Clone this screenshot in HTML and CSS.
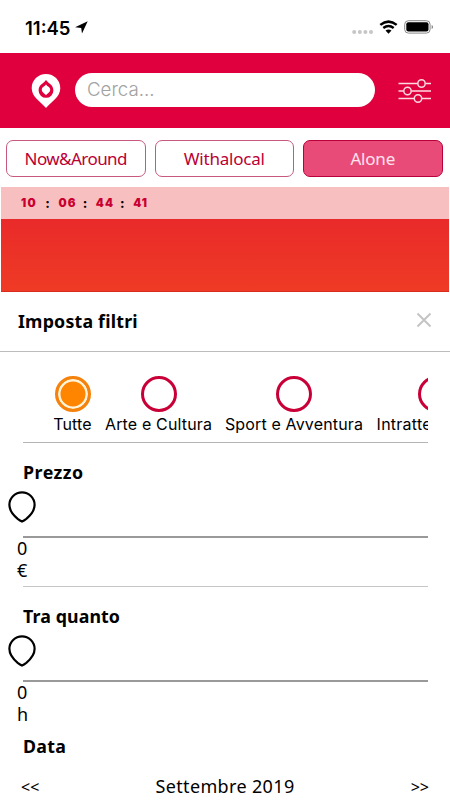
FILE: index.html
```html
<!DOCTYPE html>
<html lang="it">
<head>
<meta charset="utf-8">
<meta name="viewport" content="width=device-width">
<title>Imposta filtri</title>
<link rel="stylesheet" href="styles.css">
</head>
<body>
<div class="status">
  <span class="clock">11:45</span>
  <svg class="location" width="13" height="13" viewBox="0 0 13 13"><path d="M12.700.2 7 12.500 6.200 6.900.1 6.300Z"/></svg>
  <svg class="signal" width="22" height="6" viewBox="0 0 22 6"><circle cx="2.2" cy="3" r="2"/><circle cx="7.8" cy="3" r="2"/><circle cx="13.4" cy="3" r="2"/><circle cx="19" cy="3" r="2"/></svg>
  <svg class="wifi" width="19" height="14" viewBox="0 0 19 14"><path d="M1.3 4.9Q9.500-1.700 17.700 4.900M4.300 8Q9.500 4 14.700 8" fill="none" stroke="#000" stroke-width="2.500"/><path d="M6.500 10.600Q9.500 8.200 12.500 10.600L9.500 13.700Z"/></svg>
  <svg class="battery" width="30" height="14" viewBox="0 0 30 14"><rect x=".7" y=".7" width="25.400" height="12.400" rx="3.700" fill="none" stroke="#888"/><rect x="2.300" y="2.300" width="22.200" height="9.200" rx="2"/><path d="M27.600 5v4q1.500-.6 1.500-2t-1.500-2" fill="#888"/></svg>
</div>
<header class="topbar">
  <svg class="logo" width="30" height="36" viewBox="0 0 30 36"><path d="M15 1C7 1 .7 7.200.7 15.200.7 24 9.700 28.500 15 35c5.300-6.500 14.300-11 14.300-19.800C29.300 7.200 23 1 15 1Z" fill="#fff"/><path d="M15 7c-2 3.200-7.400 4.500-7.400 10.400a7.400 7.400 0 0 0 14.800 0C22.400 11.500 17 10.200 15 7Z" fill="#e0003d"/><path d="M15 11.500c-1 1.700-4.200 2.500-4.200 5.300 0 2.500 2.700 3.500 4.200 5.500 1.500-2 4.200-3 4.200-5.500 0-2.800-3.200-3.600-4.200-5.300Z" fill="#fff"/></svg>
  <div class="search">Cerca...</div>
  <svg class="sliders" width="34" height="24" viewBox="0 0 34 24"><g fill="none" stroke="#ffd9e2" stroke-width="1.500"><path d="M.5 4.500h19M27.500 4.500h5.500M.5 12h5M13.500 12H33M.5 19.500h15.500M24 19.500h9"/><circle cx="23.500" cy="4.500" r="3.700"/><circle cx="9.500" cy="12" r="3.700"/><circle cx="20" cy="19.500" r="3.700"/></g></svg>
</header>
<nav class="tabs">
  <div class="tab"><span class="t-now">Now&amp;Around</span></div>
  <div class="tab"><span class="t-with">Withalocal</span></div>
  <div class="tab active"><span class="t-with">Alone</span></div>
</nav>
<section class="hero">
  <div class="timer"><b>10</b><i>:</i><b>06</b><i>:</i><b>44</b><i>:</i><b>41</b></div>
</section>
<div class="panel-head">
  <h1>Imposta filtri</h1>
  <svg width="16" height="16" viewBox="0 0 16 16"><path d="M1.500 1.500l13 13M14.500 1.500l-13 13" stroke="#c3c3c3" stroke-width="1.900"/></svg>
</div>
<main class="panel">
  <div class="cats">
    <div class="cat tutte"><span class="ring on"></span><span class="label">Tutte</span></div>
    <div class="cat arte"><span class="ring"></span><span class="label">Arte e Cultura</span></div>
    <div class="cat sport"><span class="ring"></span><span class="label">Sport e Avventura</span></div>
    <div class="cat intra"><span class="ring"></span><span class="label">Intrattenimento</span></div>
  </div>
  <section class="filter price">
    <h2 class="h-prezzo">Prezzo</h2>
    <svg class="pin" width="28" height="32" viewBox="0 0 28 32"><path d="M14 1.300C7.200 1.300 1.400 6.800 1.400 13.800c0 6.700 4.600 11 8.300 14q2.500 1.900 4.300 2.800 1.800-.9 4.300-2.800c3.700-3 8.300-7.300 8.300-14C26.600 6.800 20.800 1.300 14 1.300Z"/></svg>
    <div class="track"></div>
    <div class="value">0</div>
    <div class="value">€</div>
  </section>
  <section class="filter">
    <h2>Tra quanto</h2>
    <svg class="pin" width="28" height="32" viewBox="0 0 28 32"><path d="M14 1.300C7.200 1.300 1.400 6.800 1.400 13.800c0 6.700 4.600 11 8.300 14q2.500 1.900 4.300 2.800 1.800-.9 4.300-2.800c3.700-3 8.300-7.300 8.300-14C26.600 6.800 20.800 1.300 14 1.300Z"/></svg>
    <div class="track"></div>
    <div class="value">0</div>
    <div class="value">h</div>
  </section>
  <h2 class="h-data">Data</h2>
  <div class="month"><span class="arrow">&lt;&lt;</span><span class="name">Settembre 2019</span><span class="arrow">&gt;&gt;</span></div>
</main>
</body>
</html>
```
FILE: styles.css
```css
* { box-sizing: border-box; }
html, body { margin: 0; height: 800px; overflow: hidden; }
body { width: 450px; background: #fff; color: #000; font-family: "Noto Sans", sans-serif; }
svg { display: block; flex: none; }
span { white-space: nowrap; }

.status { height: 53px; display: flex; align-items: flex-start; padding: 17px 17px 0 25px; font-family: Inter, sans-serif; }
.clock { width: 47px; font-size: 18.5px; line-height: 22px; font-weight: 600; letter-spacing: 0; }
.location { margin: 4px 0 0 3px; }
.signal { margin: 12px 5px 0 auto; fill: #c6c6c6; }
.wifi { margin: 3px 6px 0 0; }
.battery { margin-top: 3px; margin-right: -1px; }

.topbar { height: 75px; background: #e0003d; display: flex; align-items: flex-start; }
.logo { margin: 20px 0 0 31px; }
.search { margin: 20px 0 0 14px; width: 300px; height: 34px; border-radius: 17px; background: #fff; color: #a2a2a2; padding-left: 12px; font: 350 18.7px/34px Inter, sans-serif; }
.sliders { margin: 26px 0 0 23px; }

.tabs { height: 59px; display: flex; gap: 9px; padding: 12px 0 0 6px; }
.tab { width: 139.500px; height: 36.500px; border: 1px solid #c75a7c; border-radius: 7px; color: #ba0034; font-size: 17px; line-height: 35px; text-align: center; }
.tab.active { background: #e94b79; border-color: #b9003b; color: #ffe3ec; }
.t-now { letter-spacing: -.55px; }
.t-with { letter-spacing: -.2px; }

.hero { height: 105px; margin: 0 1px; background: linear-gradient(#e92a2a 30%, #ef3b25); border-bottom: 1px solid #d92d20; }
.timer { height: 32px; background: #f8bfc0; display: flex; padding-left: 20px; font: 700 11.500px/33px Inter, sans-serif; letter-spacing: 1.2px; }
.timer b { width: 17px; color: #c9002f; white-space: nowrap; }
.timer i { width: 20.400px; text-align: center; font-style: normal; font-weight: 800; font-size: 13px; }

.panel-head { height: 60px; border-bottom: 1px solid #bcbcbc; display: flex; justify-content: space-between; padding: 0 18px; }
h1, h2 { margin: 0; font-size: 17.800px; font-weight: 700; white-space: nowrap; letter-spacing: .1px; }
h1 { line-height: 59px; letter-spacing: .2px; }
.panel-head svg { margin-top: 20px; }

.panel { padding: 0 22px 0 23px; }
.cats { height: 91px; display: flex; gap: 13px; padding: 24px 0 0 30px; overflow: hidden; border-bottom: 1px solid #b5b5b5; }
.cat { flex: none; display: flex; flex-direction: column; align-items: center; }
.tutte { width: 39px; }
.arte { width: 107px; }
.sport { width: 138px; }
.intra { width: 119px; }
.ring { width: 36px; height: 36px; border: 3.500px solid #c90037; border-radius: 50%; }
.ring.on { border-color: #f5820c; background: #ff8400; box-shadow: inset 0 0 0 2.500px #fff3d9; }
.label { font: 400 16px/24px Inter, sans-serif; letter-spacing: .15px; }
.intra .label { letter-spacing: .25px; }

.filter { height: 144px; }
.price { border-bottom: 1px solid #c5c5c5; }
.filter h2 { height: 48px; line-height: 58px; }
.filter .h-prezzo { letter-spacing: .5px; }
.pin { margin-left: -15px; fill: none; stroke: #000; stroke-width: 2.200; }
.track { height: 2px; margin: 13px 0 0; background: #999; }
.value { margin-left: -6px; font-size: 18px; line-height: 20px; height: 22px; }
.h-data { height: 30px; line-height: 30px; letter-spacing: .3px; }
.month { height: 40px; display: flex; justify-content: space-between; align-items: flex-start; line-height: 51px; margin: 0 -1px 0 -2px; }
.name { font-size: 18px; letter-spacing: .35px; }
.arrow { font-size: 16px; line-height: 52px; }
```
